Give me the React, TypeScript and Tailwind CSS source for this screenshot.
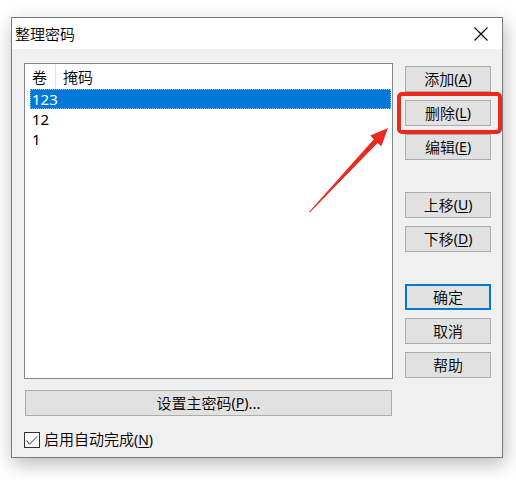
import React from "react";

const font = {
  fontFamily:
    '"Noto Sans", "Noto Sans CJK SC DemiLight", "Noto Sans CJK SC Light", "Noto Sans CJK SC", sans-serif',
};

function Btn({ children, primary }: { children: React.ReactNode; primary?: boolean }) {
  return (
    <div
      className={
        "h-[26px] w-[86px] flex items-center justify-center bg-[#e1e1e1] text-[15px] leading-[20px] text-black " +
        (primary ? "border-2 border-[#0078d7]" : "border border-[#adadad]")
      }
    >
      {children}
    </div>
  );
}

function K({ c }: { c: string }) {
  return (
    <span className="font-normal text-[14px]">
      (<span className="underline underline-offset-[2px] decoration-1">{c}</span>)
    </span>
  );
}

export default function App() {
  return (
    <div className="relative w-[516px] h-[480px] bg-white overflow-hidden text-black font-light" style={font}>
      <div className="pt-[17px] pl-[11px]">
        <div className="w-[492px] h-[441px] border border-[#7a7a7a] bg-[#f0f0f0] flex flex-col shadow-[2px_6px_18px_rgba(0,0,0,0.28)]">
          {/* title bar */}
          <div className="h-[31px] bg-white flex items-center justify-between pl-[3px] pr-[14px]">
            <span className="text-[15px] leading-[20px] pt-[1px]">整理密码</span>
            <svg width="14" height="14" viewBox="0 0 14 14" className="mt-[1px]">
              <path d="M0.5 0.5 L13.5 13.5 M13.5 0.5 L0.5 13.5" stroke="#000" strokeWidth="1.1" fill="none" />
            </svg>
          </div>
          {/* content */}
          <div className="flex pl-[12px] pt-[14px] gap-[12px]">
            <div className="w-[369px] flex flex-col">
              <div className="h-[316px] border border-[#828790] bg-white flex flex-col">
                <div className="h-[25px] flex text-[15px] leading-[20px]">
                  <div className="w-[31px] border-r border-[#e5e5e5] pl-[7px] flex items-center">卷</div>
                  <div className="pl-[7px] flex items-center">掩码</div>
                </div>
                <div className="ml-[5px] mr-[1px] flex flex-col text-[15px] leading-[18px] font-normal">
                  <div className="h-[20px] bg-[#0078d7] text-white pl-[1px] flex items-center border border-dotted border-[#8cc2ee]">
                    123
                  </div>
                  <div className="h-[20px] pl-[2px] flex items-center">12</div>
                  <div className="h-[20px] pl-[2px] flex items-center">1</div>
                </div>
              </div>
              <div className="mt-[11px] ml-[1px] w-[367px] h-[26px] bg-[#e1e1e1] border border-[#adadad] flex items-center justify-center text-[15px] leading-[20px]">
                设置主密码<K c="P" /><span className="font-normal">...</span>
              </div>
              <div className="mt-[13px] flex items-center">
                <div className="w-[16px] h-[16px] border border-[#333] bg-white relative">
                  <svg width="14" height="14" viewBox="0 0 14 14" className="absolute left-0 top-0">
                    <polyline points="1.7,7.3 4.3,11.3 12.3,3.3" stroke="#333" strokeWidth="1" fill="none" />
                  </svg>
                </div>
                <span className="ml-[4px] text-[15px] leading-[20px]">
                  启用自动完成<K c="N" />
                </span>
              </div>
            </div>
            <div className="w-[86px] flex flex-col pt-[3px]">
              <Btn>添加<K c="A" /></Btn>
              <div className="h-[8px]" />
              <Btn>删除<K c="L" /></Btn>
              <div className="h-[8px]" />
              <Btn>编辑<K c="E" /></Btn>
              <div className="h-[32px]" />
              <Btn>上移<K c="U" /></Btn>
              <div className="h-[8px]" />
              <Btn>下移<K c="D" /></Btn>
              <div className="h-[32px]" />
              <Btn primary>确定</Btn>
              <div className="h-[8px]" />
              <Btn>取消</Btn>
              <div className="h-[8px]" />
              <Btn>帮助</Btn>
            </div>
          </div>
        </div>
      </div>
      {/* annotation: red box */}
      <div className="absolute left-[397px] top-[92px] w-[105px] h-[42px] border-[4px] border-[#ea2a1f] rounded-[5px]" />
      {/* annotation: arrow */}
      <svg className="absolute left-0 top-0" width="516" height="480" viewBox="0 0 516 480">
        <polygon
          points="309,212 373.8,139.3 370.3,135.6 388,128 381.4,146.2 377.6,142.9 309.8,212.6"
          fill="#ea2a1f"
        />
      </svg>
    </div>
  );
}
